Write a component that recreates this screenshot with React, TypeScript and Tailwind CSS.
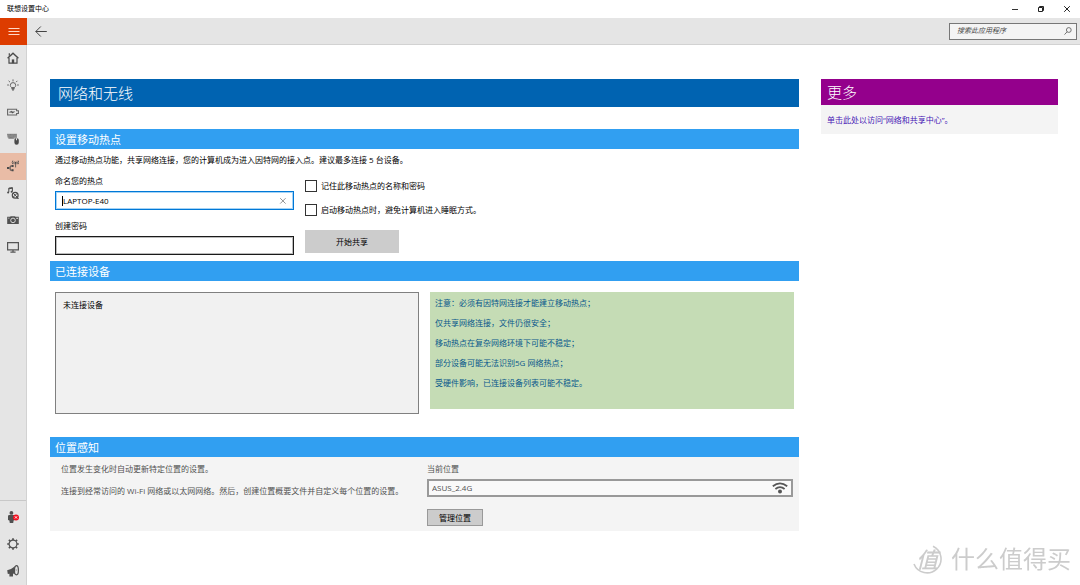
import type { ReactNode } from "react";

const HomeIcon = () => (
  <svg viewBox="0 0 12 12" className="size-3" fill="none" stroke="#4a4a4a">
    <path d="M.6 6.2 6 1.2l5.4 5" strokeWidth="1.4" />
    <path d="M2 5.8v5.4h8V5.8M2.3 1.2v2.6" strokeWidth="1.2" />
    <path d="M4.8 7.4h2.4v3.8H4.8z" fill="#4a4a4a" stroke="none" />
  </svg>
);

const BulbIcon = () => (
  <svg viewBox="0 0 12 12" className="size-3" fill="none" stroke="#666" strokeWidth="1">
    <path d="M4.6 8.6C3.8 7.9 3.3 7.3 3.3 6.3a2.7 2.7 0 0 1 5.4 0c0 1-.5 1.6-1.3 2.3z" />
    <path d="M4.2 9h3.6M4.6 10h2.8M5.3 11.2h1.4" strokeWidth="1.2" />
    <path d="M6 .4v2M1.6 1.8 3 3.2M10.4 1.8 9 3.2M.2 6h1.7M10.1 6h1.7" />
  </svg>
);

const BatteryIcon = () => (
  <svg viewBox="0 0 12 12" className="size-3" fill="none" stroke="#666">
    <path d="M.6 3.2h9v1.5h1.8v2.8H9.6V9h-9z" strokeWidth="1.1" />
    <path d="M2.2 6.2 4.8 5v.7h3L5.2 7.3v-.8z" fill="#444" stroke="#444" strokeWidth=".3" />
  </svg>
);

const KeyboardIcon = () => (
  <svg viewBox="0 0 12 12" className="size-3">
    <path d="M0 .8h10v4.6H7.2L6.4 6H1.4V4.8H.6z" fill="#999" />
    <path d="M.4 1.7h9.2M.8 3.1h8.6M1.6 4.6h5" stroke="#666" strokeWidth=".7" strokeDasharray="1 .3" />
    <path d="M7.4 8.4V6.8q0-1.4 1.6-1.6v2h1v-2q1.8.2 1.8 1.8v2.4q0 2.4-2.2 2.4t-2.2-2.4z" fill="#4a4a4a" />
  </svg>
);

const NetworkIcon = () => (
  <svg viewBox="0 0 12 12" className="size-3" fill="none" stroke="#4a4a4a">
    <path d="M.8 8h2.4M5.6 6H3.2v4.2h2.4" strokeWidth=".9" />
    <path d="M0 7h2v2H0zM4.6 5h2v2h-2zM4.6 9.2h2v2h-2z" fill="#4a4a4a" stroke="none" />
    <path d="M8.6 3v4.4M7.2 1.4q-.9 1.4 0 2.8M10 1.4q.9 1.4 0 2.8M5.8.6q-1.2 1.8 0 3.6M11.2.6q1.2 1.8 0 3.6" strokeWidth=".8" />
    <circle cx="8.6" cy="2.8" r="1" fill="#4a4a4a" stroke="none" />
  </svg>
);

const MediaIcon = () => (
  <svg viewBox="0 0 12 12" className="size-3" fill="none" stroke="#4a4a4a">
    <path d="M1.8 5.2V1.1L5.4.6v4M1.8 1.8l3.6-.6" strokeWidth="1" />
    <circle cx="1.1" cy="5.4" r="1" fill="#4a4a4a" stroke="none" />
    <circle cx="4.6" cy="4.8" r="1" fill="#4a4a4a" stroke="none" />
    <circle cx="8.2" cy="8.2" r="2.9" strokeWidth="1.2" />
    <path d="m6.2 6.2 4 4m0-4-4 4M9.6 11.3h2.2" strokeWidth="1" />
  </svg>
);

const CameraIcon = () => (
  <svg viewBox="0 0 12 12" className="size-3">
    <path d="M.2 2.8h2.8l.8-.6h4l.8.6h3.2v7.2H.2z" fill="#505050" />
    <circle cx="6" cy="6.4" r="2.3" fill="none" stroke="#e5e5e5" strokeWidth=".9" />
    <path d="M9.4 3.8h1.4v1.2H9.4zM1.2 3.8h1.2v.8H1.2z" fill="#e5e5e5" />
  </svg>
);

const DisplayIcon = () => (
  <svg viewBox="0 0 12 12" className="size-3" fill="none" stroke="#555">
    <path d="M.6 1.6h10.8v7.2H.6z" strokeWidth="1.2" />
    <path d="M6 9v1.8M3.4 11.2h5.2" strokeWidth="1.2" />
  </svg>
);

const AccountIcon = () => (
  <svg viewBox="0 0 14 12" className="h-3 w-[14px]">
    <circle cx="5.4" cy="1.9" r="1.9" fill="#505050" />
    <path d="M2 5.2q0-1.2 1.2-1.2h4.4q1.2 0 1.2 1.2V9l-1.2.6-.4 2.4H3.8l-.4-2.4L2 9z" fill="#505050" />
    <circle cx="10" cy="6.4" r="3" fill="#f01020" />
    <path d="m8.9 5.3 2.2 2.2m0-2.2L8.9 7.5" stroke="#fff" strokeWidth=".9" />
  </svg>
);

const gearTeeth = [0, 45, 90, 135, 180, 225, 270, 315];

const GearIcon = () => (
  <svg viewBox="0 0 12 12" className="size-3" fill="none" stroke="#505050">
    <circle cx="6" cy="6" r="3.9" strokeWidth="1.2" />
    {gearTeeth.map((angle) => (
      <path key={angle} d="M6 .2v1.8" strokeWidth="1.7" transform={`rotate(${angle} 6 6)`} />
    ))}
  </svg>
);

const MegaphoneIcon = () => (
  <svg viewBox="0 0 12 12" className="size-3">
    <path d="M.2 5.2Q5 4 8.4 1v8.4L6 8.4v3.2H2.4V8.8L.8 9z" fill="#505050" />
    <ellipse cx="9.4" cy="5.2" rx="2" ry="4.6" fill="#e5e5e5" stroke="#505050" strokeWidth="1.2" />
    <path d="M8.8 3.6q1.4 1.5 0 3.2z" fill="#505050" />
  </svg>
);

const WifiIcon = () => (
  <svg viewBox="0 0 16 12" className="h-3 w-4" fill="none" stroke="#555">
    <path d="M.8 4.2q7.2-5.6 14.4 0" strokeWidth="1.8" />
    <path d="M3.4 7q4.6-3.8 9.2 0" strokeWidth="1.8" />
    <circle cx="8" cy="9.6" r="2" fill="#555" stroke="none" />
  </svg>
);

const navItems = [
  { label: "主页", icon: <HomeIcon /> },
  { label: "提示", icon: <BulbIcon /> },
  { label: "电源", icon: <BatteryIcon /> },
  { label: "输入设备", icon: <KeyboardIcon /> },
  { label: "网络和无线", icon: <NetworkIcon />, active: true },
  { label: "音频", icon: <MediaIcon /> },
  { label: "相机", icon: <CameraIcon /> },
  { label: "显示", icon: <DisplayIcon /> },
];

const bottomItems = [
  { label: "帐户", icon: <AccountIcon /> },
  { label: "设置", icon: <GearIcon /> },
  { label: "反馈", icon: <MegaphoneIcon /> },
];

const notes = [
  "注意：必须有因特网连接才能建立移动热点；",
  "仅共享网络连接，文件仍很安全；",
  "移动热点在复杂网络环境下可能不稳定；",
  "部分设备可能无法识别5G 网络热点；",
  "受硬件影响，已连接设备列表可能不稳定。",
];

const NavButton: React.FC<{ label: string; icon: ReactNode; active?: boolean }> = ({ label, icon, active }) => (
  <button
    aria-label={label}
    className={`flex h-[27px] w-full items-center justify-center pb-[2px] ${active ? "bg-[#e9bca6]" : ""}`}
  >
    {icon}
  </button>
);

const SectionTitle: React.FC<{ children: ReactNode }> = ({ children }) => (
  <h2 className="flex h-5 items-center bg-[#319ff1] px-[5px] text-[11px] leading-none text-white">{children}</h2>
);

const CheckRow: React.FC<{ id: string; label: string }> = ({ id, label }) => (
  <div className="flex h-3 items-center gap-1">
    <input id={id} type="checkbox" className="size-3 shrink-0 appearance-none border border-[#333] bg-white checked:bg-[#0078d7]" />
    <label htmlFor={id}>{label}</label>
  </div>
);

export default function App() {
  return (
    <div className="flex min-h-screen flex-col bg-white font-['Open_Sans','Noto_Sans_CJK_SC',sans-serif] text-[8px] leading-3 text-black">
      <div className="flex h-[18px] items-center justify-between pl-[7px] text-[7px]">
        <span>联想设置中心</span>
        <div className="flex">
          <button aria-label="最小化" className="flex h-[18px] w-[26px] items-center justify-center">
            <svg viewBox="0 0 8 8" className="size-2" stroke="#333"><path d="M1 4.5h6" /></svg>
          </button>
          <button aria-label="还原" className="flex h-[18px] w-[26px] items-center justify-center">
            <svg viewBox="0 0 8 8" className="size-2" fill="none" stroke="#222"><path d="M1.5 2.5h4v4h-4zM2.5 2V1.5h4v4H6" /></svg>
          </button>
          <button aria-label="关闭" className="flex h-[18px] w-[26px] items-center justify-center">
            <svg viewBox="0 0 8 8" className="size-2" stroke="#222"><path d="m1.2 1.2 5.6 5.6m0-5.6L1.2 6.8" /></svg>
          </button>
        </div>
      </div>

      <header className="flex h-[27px] items-center border-b border-[#d2d2d2] bg-[#e5e5e5] pr-[3px]">
        <button aria-label="菜单" className="flex h-[27px] w-[27px] items-center justify-center bg-[#dd3c00]">
          <svg viewBox="0 0 12 12" className="size-3" stroke="#ffd9c8"><path d="M.5 3.5h11M.5 6.5h11M.5 9.5h11" /></svg>
        </button>
        <button aria-label="返回" className="flex h-[27px] w-[27px] items-center justify-center">
          <svg viewBox="0 0 12 12" className="size-3" fill="none" stroke="#444"><path d="M.8 6.5h11M5.8 1.5l-5 5 5 5" /></svg>
        </button>
        <div className="ml-auto flex h-[17px] w-32 items-center border border-[#777] bg-[#f4f4f4] pr-1 pl-[7px]">
          <input aria-label="搜索此应用程序" placeholder="搜索此应用程序" className="min-w-0 flex-1 bg-transparent text-[7px] italic outline-none placeholder:text-[#444]" />
          <button aria-label="搜索">
            <svg viewBox="0 0 8 8" className="size-2" fill="none" stroke="#666" strokeWidth=".9"><circle cx="4.8" cy="3" r="2.4" /><path d="M3.1 4.8.5 7.6" /></svg>
          </button>
        </div>
      </header>

      <div className="flex flex-1">
        <nav className="flex w-[27px] shrink-0 flex-col justify-between border-r border-[#d2d2d2] bg-[#e5e5e5]">
          <div>{navItems.map((item) => <NavButton key={item.label} {...item} />)}</div>
          <div className="border-t border-[#c8c8c8] pt-[3px]">
            {bottomItems.map((item) => <NavButton key={item.label} {...item} />)}
          </div>
        </nav>

        <div className="grid flex-1 grid-cols-[749fr_237fr] items-start gap-[22px] pt-[34px] pr-[22px] pb-5 pl-[23px]">
          <main>
            <h1 className="flex h-7 items-center bg-[#0063b1] px-2 text-[15px] leading-none font-light text-white">网络和无线</h1>

            <section className="mt-[22px]">
              <SectionTitle>设置移动热点</SectionTitle>
              <div className="px-[5px] pt-[5px]">
                <p>通过移动热点功能，共享网络连接，您的计算机成为进入因特网的接入点。建议最多连接 5 台设备。</p>
                <div className="mt-[9px] flex gap-[11px]">
                  <div className="w-[239px]">
                    <label htmlFor="hotspot-name" className="block">命名您的热点</label>
                    <div className="mt-1 flex h-[19px] items-center border border-[#0078d7] px-[6px] ring-1 ring-[#a5d3f5] ring-inset">
                      <span className="h-[10px] w-px bg-black" />
                      <input id="hotspot-name" defaultValue="LAPTOP-E40" className="min-w-0 flex-1 bg-transparent outline-none" />
                      <button aria-label="清除">
                        <svg viewBox="0 0 8 8" className="size-2" stroke="#777" strokeWidth=".8"><path d="m1.2 1.2 5.4 5.4m0-5.4L1.2 6.6" /></svg>
                      </button>
                    </div>
                    <label htmlFor="hotspot-password" className="mt-[10px] block">创建密码</label>
                    <input id="hotspot-password" type="password" className="mt-1 block h-[19px] w-full border border-[#1a1a1a] px-1 ring-1 ring-[#bbb] outline-none ring-inset" />
                  </div>
                  <div className="flex flex-col items-start gap-3 pt-[5px]">
                    <CheckRow id="remember" label="记住此移动热点的名称和密码" />
                    <CheckRow id="keep-awake" label="启动移动热点时，避免计算机进入睡眠方式。" />
                    <button className="mt-[2px] h-[23px] w-[94px] bg-[#ccc]">开始共享</button>
                  </div>
                </div>
              </div>
            </section>

            <section className="mt-[6px]">
              <SectionTitle>已连接设备</SectionTitle>
              <div className="mt-[11px] grid grid-cols-2 items-start gap-[11px] px-[5px]">
                <div className="h-[122px] border border-[#808080] bg-[#f1f1f1] px-[7px] py-[6px]">未连接设备</div>
                <div className="flex h-[117px] flex-col gap-2 bg-[#c5dcb5] px-[5px] py-[5px] text-[#08588c]">
                  {notes.map((note) => <p key={note}>{note}</p>)}
                </div>
              </div>
            </section>

            <section className="mt-[23px]">
              <SectionTitle>位置感知</SectionTitle>
              <div className="grid grid-cols-2 bg-[#f4f4f4] pt-[6px] pr-[6px] pb-[5px] pl-[11px] text-[#505050]">
                <div>
                  <p>位置发生变化时自动更新特定位置的设置。</p>
                  <p className="mt-[10px]">连接到经常访问的 Wi-Fi 网络或以太网网络。然后，创建位置概要文件并自定义每个位置的设置。</p>
                </div>
                <div>
                  <label htmlFor="location" className="block">当前位置</label>
                  <div className="mt-1 flex h-[18px] items-center border-2 border-[#999] bg-[#f9f9f9] px-[3px]">
                    <input id="location" readOnly defaultValue="ASUS_2.4G" className="min-w-0 flex-1 bg-transparent outline-none" />
                    <WifiIcon />
                  </div>
                  <button className="mt-3 h-[17px] w-14 border border-[#999] bg-[#ccc] text-black">管理位置</button>
                </div>
              </div>
            </section>
          </main>

          <aside className="bg-[#f4f4f4]">
            <h2 className="flex h-[26px] items-center bg-[#94008c] px-[6px] text-[15px] leading-none font-light text-white">更多</h2>
            <p className="px-[6px] pt-[9px] pb-2">
              <a href="#network" className="text-[#4617b4]">单击此处以访问“网络和共享中心”。</a>
            </p>
          </aside>
        </div>
      </div>

      <div className="pointer-events-none fixed right-[9px] bottom-[10px] flex items-center gap-[9px] text-[24px] leading-8 text-[#ccc]">
        <div className="relative flex size-[30px] items-center justify-center">
          <svg viewBox="0 0 30 30" className="absolute size-full" fill="none" stroke="#ccc" strokeWidth="1.6">
            <path d="M21 2.2A14 14 0 1 1 2 20" />
          </svg>
          <span className="text-[22px] font-medium italic">值</span>
        </div>
        <span>什么值得买</span>
      </div>
    </div>
  );
}
